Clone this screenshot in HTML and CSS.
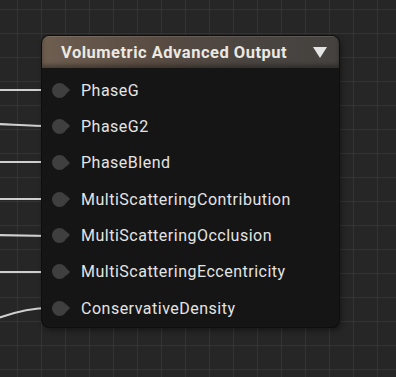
FILE: index.html
```html
<!DOCTYPE html>
<html>
<head>
<meta charset="utf-8">
<link rel="stylesheet" href="styles.css">
</head>
<body>
<div class="canvas">
  <svg class="wires" width="396" height="377" viewBox="0 0 396 377">
    <g fill="none" stroke="#cfcfcf" stroke-width="2.2" stroke-linecap="round">
      <path d="M-2 90 L50 90"/>
      <path d="M-2 124 C20 125 35 126 50 126"/>
      <path d="M-2 162 L50 162"/>
      <path d="M-2 199 L50 199"/>
      <path d="M-2 235 L50 236"/>
      <path d="M-2 272 L50 272"/>
      <path d="M-2 318 C15 312 30 308 50 308"/>
    </g>
  </svg>
  <div class="node">
    <div class="node-header">
      <span class="node-title">Volumetric Advanced Output</span>
      <span class="caret"></span>
    </div>
    <div class="node-body">
      <div class="pin-row"><span class="pin"></span><span class="pin-label">PhaseG</span></div>
      <div class="pin-row"><span class="pin"></span><span class="pin-label">PhaseG2</span></div>
      <div class="pin-row"><span class="pin"></span><span class="pin-label">PhaseBlend</span></div>
      <div class="pin-row"><span class="pin"></span><span class="pin-label">MultiScatteringContribution</span></div>
      <div class="pin-row"><span class="pin"></span><span class="pin-label">MultiScatteringOcclusion</span></div>
      <div class="pin-row"><span class="pin"></span><span class="pin-label">MultiScatteringEccentricity</span></div>
      <div class="pin-row"><span class="pin"></span><span class="pin-label">ConservativeDensity</span></div>
    </div>
  </div>
</div>
</body>
</html>
```
FILE: styles.css
```css
html, body {
  margin: 0;
  padding: 0;
  width: 396px;
  height: 377px;
  overflow: hidden;
  background: #262626;
}
.canvas {
  position: relative;
  width: 396px;
  height: 377px;
  background-color: #262626;
  background-image:
    linear-gradient(to right, #343434 1px, transparent 1px),
    linear-gradient(to bottom, #343434 1px, transparent 1px);
  background-size: 24px 24px;
  background-position: 17px 9px;
  font-family: Roboto, "Liberation Sans", sans-serif;
}
.wires {
  position: absolute;
  left: 0;
  top: 0;
}
.node {
  position: absolute;
  left: 42px;
  top: 36px;
  width: 297px;
  height: 291px;
  background: #151515;
  border-radius: 7px;
  box-shadow: 0 0 0 1px #0e0e0e, 2px 3px 6px rgba(0,0,0,0.45);
  display: flex;
  flex-direction: column;
  overflow: hidden;
}
.node-header {
  height: 32px;
  display: flex;
  align-items: center;
  justify-content: space-between;
  padding: 0 12px 0 19px;
  background: linear-gradient(to right, #6e5e50 0%, #5a4d43 35%, #4a4541 70%, #45423f 100%);
  box-shadow: inset 0 -3px 4px rgba(0,0,0,0.35), inset 0 1px 0 rgba(255,255,255,0.12);
}
.node-title {
  color: #ece8e2;
  font-weight: bold;
  font-size: 16.5px;
  letter-spacing: 0.5px;
}
.caret {
  width: 0;
  height: 0;
  border-left: 7px solid transparent;
  border-right: 7px solid transparent;
  border-top: 11px solid #e4e4e4;
  margin-top: 1px;
}
.node-body {
  display: flex;
  flex-direction: column;
  padding-top: 4px;
}
.pin-row {
  height: 36.33px;
  display: flex;
  align-items: center;
  padding-left: 10px;
}
.pin {
  position: relative;
  width: 15px;
  height: 15px;
  border-radius: 50%;
  background: #3f3f3f;
  margin-right: 14px;
}
.pin::after {
  content: "";
  position: absolute;
  left: 14px;
  top: 3.5px;
  border-top: 4px solid transparent;
  border-bottom: 4px solid transparent;
  border-left: 4px solid #3f3f3f;
}
.pin-label {
  color: #e4e4e4;
  font-size: 16px;
  font-weight: 400;
  letter-spacing: 0.5px;
}
```
